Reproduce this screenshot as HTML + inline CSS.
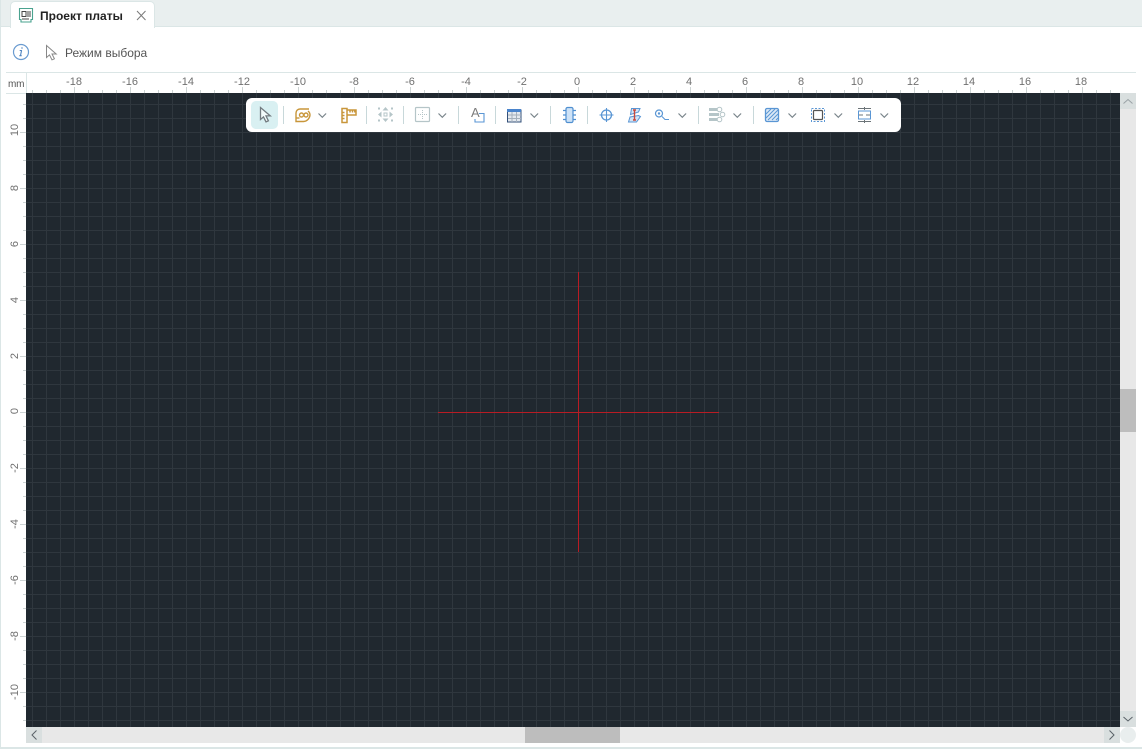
<!DOCTYPE html>
<html><head><meta charset="utf-8"><style>
html,body{margin:0;padding:0;width:1142px;height:749px;overflow:hidden;background:#fff}
body{position:relative;font-family:"Liberation Sans","Noto Sans CJK SC",sans-serif;color:#444}
div{position:absolute;box-sizing:border-box}
.tx{font-size:11px;line-height:14px;color:#707070;width:40px;text-align:center;top:75px;white-space:nowrap}
.ty{font-size:11px;line-height:14px;color:#707070;width:40px;text-align:center;left:-5px;transform:rotate(-90deg);white-space:nowrap}
</style></head><body>
<div style="left:0;top:0;width:1142px;height:27px;background:#e9efef;border-bottom:1px solid #dbe6e6"></div>
<div style="left:0;top:0;width:1px;height:749px;background:#dbe6e6"></div>
<div style="left:0;top:747px;width:1142px;height:2px;background:#dbe6e6"></div>
<div style="left:10px;top:1px;width:145px;height:27px;background:#fff;border-radius:5px 5px 0 0;border:1px solid #dbe6e6;border-bottom:0"></div>
<div style="left:40px;top:9px;font-size:12px;line-height:15px;font-weight:bold;color:#222;white-space:nowrap">Проект платы</div>
<div style="left:65px;top:46px;font-size:12px;line-height:15px;color:#555;white-space:nowrap">Режим выбора</div>
<div style="left:6px;top:72px;width:1130px;height:1px;background:#dbe6e6"></div>
<div style="left:6px;top:93px;width:20px;height:1px;background:#dbe6e6"></div>
<div style="left:26px;top:73px;width:1px;height:20px;background:#dbe6e6"></div>
<div style="left:8px;top:78px;font-size:10px;line-height:14px;color:#555;letter-spacing:-.2px">mm</div>
<!-- top ruler ticks -->
<div style="left:32px;top:90px;width:1088px;height:3px;background:repeating-linear-gradient(90deg,#ccd3d3 0 1px,transparent 1px 14px)"></div>
<div style="left:74px;top:87px;width:1046px;height:3px;background:repeating-linear-gradient(90deg,#ccd3d3 0 1px,transparent 1px 56px)"></div>
<!-- left ruler ticks -->
<div style="left:23px;top:104px;width:3px;height:623px;background:repeating-linear-gradient(180deg,#ccd3d3 0 1px,transparent 1px 14px)"></div>
<div style="left:20px;top:132px;width:3px;height:595px;background:repeating-linear-gradient(180deg,#ccd3d3 0 1px,transparent 1px 56px)"></div>
<!-- top labels -->
<div class="tx" style="left:54px">-18</div><div class="tx" style="left:110px">-16</div><div class="tx" style="left:166px">-14</div><div class="tx" style="left:222px">-12</div><div class="tx" style="left:278px">-10</div><div class="tx" style="left:334px">-8</div><div class="tx" style="left:390px">-6</div><div class="tx" style="left:446px">-4</div><div class="tx" style="left:502px">-2</div><div class="tx" style="left:557px">0</div><div class="tx" style="left:613px">2</div><div class="tx" style="left:669px">4</div><div class="tx" style="left:725px">6</div><div class="tx" style="left:781px">8</div><div class="tx" style="left:837px">10</div><div class="tx" style="left:893px">12</div><div class="tx" style="left:949px">14</div><div class="tx" style="left:1005px">16</div><div class="tx" style="left:1061px">18</div>
<!-- left labels -->
<div class="ty" style="top:123px">10</div><div class="ty" style="top:181px">8</div><div class="ty" style="top:237px">6</div><div class="ty" style="top:293px">4</div><div class="ty" style="top:349px">2</div><div class="ty" style="top:404px">0</div><div class="ty" style="top:461px">-2</div><div class="ty" style="top:517px">-4</div><div class="ty" style="top:573px">-6</div><div class="ty" style="top:629px">-8</div><div class="ty" style="top:685px">-10</div>
<!-- canvas -->
<div style="left:26px;top:93px;width:1094px;height:634px;background-color:#20282f;background-image:linear-gradient(90deg,#2f373e 1px,transparent 1px),linear-gradient(180deg,#2f373e 1px,transparent 1px);background-size:14px 14px;background-position:6px 11px"></div>
<div style="left:438px;top:412px;width:281px;height:1px;background:#b81c24"></div>
<div style="left:578px;top:272px;width:1px;height:280px;background:#b81c24"></div>
<!-- scrollbars -->
<div style="left:1120px;top:93px;width:16px;height:634px;background:#e8e8e8"></div>
<div style="left:26px;top:727px;width:1094px;height:16px;background:#e8e8e8"></div>
<div style="left:1120px;top:93px;width:16px;height:16px;background:#d9dfdf"></div>
<div style="left:1120px;top:711px;width:16px;height:16px;background:#d9dfdf"></div>
<div style="left:26px;top:727px;width:16px;height:16px;background:#d9dfdf"></div>
<div style="left:1104px;top:727px;width:16px;height:16px;background:#d9dfdf"></div>
<div style="left:1120px;top:389px;width:16px;height:43px;background:#bdbdbd"></div>
<div style="left:525px;top:727px;width:95px;height:16px;background:#bdbdbd"></div>
<div style="left:1120px;top:727px;width:16px;height:16px;background:#e9eeee;border-radius:8px"></div>
<!-- toolbar -->
<div style="left:246px;top:98px;width:655px;height:34px;background:#fff;border-radius:6px"></div>
<div style="left:251px;top:101px;width:27px;height:28px;background:#d9f0f2;border-radius:5px"></div>
<svg width="1142" height="749" viewBox="0 0 1142 749" style="position:absolute;left:0;top:0" fill="none">
<!-- tab icon -->
<path d="M19.500 8.500h13v11h-1.500v2.500h-10v-2.500h-1.500z" stroke="#4aa38f" stroke-width="1.100"/>
<path d="M22 11.500h4v5h-4zM28 11v6M30 11v6M22 19h7" stroke="#444" stroke-width="1"/>
<path d="M137 11l8.500 9M145.500 11l-8.500 9" stroke="#7a7a7a"/>
<!-- info -->
<circle cx="21" cy="52" r="7.500" stroke="#6a9bd0" stroke-width="1.200"/>
<path d="M22 47.300v1.500M21.600 50.300l-1.100 5.200M19.700 50.500h2.200M19.300 55.700h2.400" stroke="#4f84c0" stroke-width="1.100"/>
<path d="M46.500 45.500v12l3-2.600 2.500 5 2.400-1.100-2.400-4.800h4.200z" stroke="#888" fill="#fff"/>
<!-- separators -->
<g stroke="#c8d8da"><path d="M283.500 106v18M366.500 106v18M403.500 106v18M458.500 106v18M495.500 106v18M550.500 106v18M587.500 106v18M698.500 106v18M753.500 106v18"/></g>
<!-- chevrons -->
<g stroke="#7a858b" stroke-width="1.200"><path d="M318.500 113.500l3.800 3.800 3.800-3.800M438.500 113.500l3.800 3.800 3.800-3.800M530.500 113.500l3.800 3.800 3.800-3.800M678.500 113.500l3.800 3.800 3.800-3.800M733.500 113.500l3.800 3.800 3.800-3.800M788.500 113.500l3.800 3.800 3.800-3.800M834.500 113.500l3.800 3.800 3.800-3.800M880.500 113.500l3.800 3.800 3.800-3.800"/></g>
<!-- cursor -->
<path d="M260.500 107.500v12l3-2.600 2.500 5 2.400-1.100-2.400-4.900h4.300z" stroke="#737b80" fill="#f3fbfb" stroke-width="1.300"/>
<!-- spiral -->
<g stroke="#c8963a" stroke-width="1.400"><path d="M309 109h-9a4 4 0 0 0-4 4v8.500h7.500a7 7 0 0 0 6.500-6.500 5 5 0 0 0-2-4"/><path d="M296 118h3.500"/><circle cx="301.500" cy="115" r="2"/><circle cx="306" cy="115" r="2"/></g>
<!-- ruler -->
<g stroke="#c8963a" stroke-width="1.500"><path d="M342 108.500h5v14h-5zM347 110h9v5h-9M350 110v2.500M352.500 110v2.500M354.800 110v2.500M342 112.500h2.500M342 115.500h2.500M342 118.500h2.500"/></g>
<!-- grey dots -->
<g fill="#b5c5c8"><path d="M385.500 107l3 3.500h-6zM385.500 122l3-3.500h-6zM378 114.500l3.500-3v6zM393 114.500l-3.500-3v6z"/><rect x="378" y="107.500" width="2" height="2"/><rect x="391" y="107.500" width="2" height="2"/><rect x="378" y="119.500" width="2" height="2"/><rect x="391" y="119.500" width="2" height="2"/></g>
<rect x="384" y="113" width="3" height="3" stroke="#b5c5c8"/>
<!-- grid square -->
<rect x="415.500" y="107.500" width="14" height="14" rx="1" stroke="#b5c5c8" stroke-width="1.200"/>
<path d="M422.500 110v9M418 114.500h9" stroke="#b5c5c8" stroke-dasharray="1 1"/>
<!-- text -->
<text x="471" y="117" font-size="13" fill="#7c7c7c" font-family="Liberation Sans,sans-serif">A</text>
<path d="M479 113.500h5v8.500h-9v-3" stroke="#5a96d4" stroke-width="1.100"/>
<!-- table -->
<rect x="507.500" y="110" width="13.500" height="12" fill="#e4e9ef" stroke="#33507a"/>
<rect x="507" y="109" width="14" height="3" fill="#4a84cc"/>
<path d="M512 112v10M516.500 112v10M508 115h13M508 118.500h13" stroke="#a5b0bb"/>
<!-- chip -->
<rect x="566" y="107.500" width="7" height="15" rx="1.500" fill="#cde2f7" stroke="#4f8fd0" stroke-width="1.200"/>
<path d="M563 110.500h3M563 115h3M563 119.500h3M573 110.500h3M573 115h3M573 119.500h3" stroke="#4f8fd0" stroke-width="1.200"/>
<!-- crosshair -->
<circle cx="606.500" cy="115" r="5" stroke="#5a96d4" stroke-width="1.300"/>
<path d="M606.500 108v14M599.500 115h14" stroke="#5a96d4" stroke-width="1.100"/>
<!-- layers -->
<path d="M631.500 108.500h8.500l-1.500 3.500-8 2.500zM630 117l8.500-1.500 2 1-4 5.500h-8z" fill="#d2e5f7" stroke="#5a96d4"/>
<path d="M634.500 110v10M633 110h3M633 120h3" stroke="#c8483c" stroke-width="1.400"/>
<!-- via -->
<circle cx="659" cy="113.500" r="3.500" stroke="#5a96d4" stroke-width="1.200"/><circle cx="659" cy="113.500" r="1.200" fill="#5a96d4"/>
<path d="M662 116.500l3 3h4" stroke="#5a96d4" stroke-width="1.100"/>
<!-- tree -->
<g fill="#b5c5c8"><rect x="709" y="108" width="10" height="3"/><rect x="709" y="113" width="10" height="3"/><rect x="709" y="118" width="10" height="3"/></g>
<g stroke="#b5c5c8" fill="#fff"><circle cx="719.500" cy="109.500" r="2.300"/><circle cx="722.500" cy="114.500" r="2.300"/><circle cx="719.500" cy="119.500" r="2.300"/></g>
<!-- hatch -->
<rect x="765.500" y="108.500" width="13" height="13" rx="1.500" fill="#dce9f6" stroke="#5a96d4" stroke-width="1.300"/>
<path d="M766 114l5-5M766 118l9-9M768 120l10-10M772 120l6-6M776 120l2-2" stroke="#5a96d4"/>
<!-- dotted square -->
<rect x="811.500" y="108.500" width="13" height="13" stroke="#5a96d4" stroke-dasharray="2 1.500"/>
<rect x="813.500" y="110.500" width="9" height="9" rx="1" stroke="#555" stroke-width="1.200"/>
<!-- last -->
<path d="M858 108.500h13M858 121.500h13M859 115h4M866 115h4M864.500 107v3M864.500 120v3" stroke="#6c7478"/>
<rect x="858.500" y="111" width="12" height="8" stroke="#5a96d4"/>
<!-- scroll arrows -->
<g stroke="#5a6268" stroke-width="1"><path d="M1123.500 103.500l4.500-4 4.500 4" stroke="#9aa2a6"/><path d="M1123.500 717l4.500 4 4.500-4M36.500 730.500l-4.500 4.500 4.500 4.500M1109.500 730.500l4.500 4.500-4.500 4.500"/></g>
</svg>
</body></html>
